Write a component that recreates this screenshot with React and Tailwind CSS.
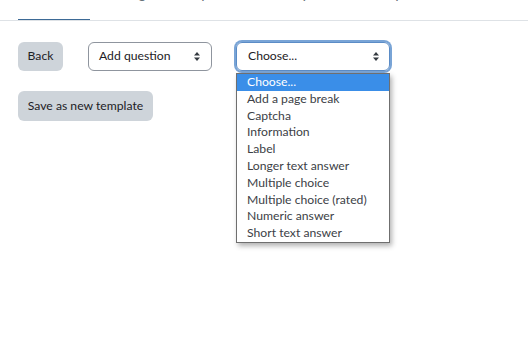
import React from "react";

function Arrows() {
  return (
    <svg width="6" height="9" viewBox="0 0 6 9" className="shrink-0">
      <path d="M3 0 L6 3.4 L0 3.4 Z" fill="#343a40" />
      <path d="M3 9 L6 5.6 L0 5.6 Z" fill="#343a40" />
    </svg>
  );
}

const items = [
  "Choose...",
  "Add a page break",
  "Captcha",
  "Information",
  "Label",
  "Longer text answer",
  "Multiple choice",
  "Multiple choice (rated)",
  "Numeric answer",
  "Short text answer",
];

export default function App() {
  return (
    <div
      className="w-[528px] h-[346px] bg-white overflow-hidden text-[#1d2125]"
      style={{ fontFamily: 'Lato, "Noto Sans", sans-serif' }}
    >
      {/* tabs, scrolled mostly out of view */}
      <div className="h-[21px] border-b border-[#dee2e6] flex items-end pl-[18px] overflow-hidden">
        <div className="w-[72px] h-[2px] bg-[#3d6a96] mb-[-1px] shrink-0" />
        <div className="flex text-[15px] leading-[20px] text-[#6a737b] whitespace-nowrap -translate-y-[18px]">
          <span className="ml-[10px]">Settings</span>
          <span className="ml-[14px]">Edit questions</span>
          <span className="ml-[12px]">Analysis</span>
          <span className="ml-[10px]">Show responses</span>
        </div>
      </div>

      <div className="flex items-start pl-[18px] pt-[21px] text-[12.2px] whitespace-nowrap">
        <button className="h-[29px] w-[45px] rounded-[6px] bg-[#ced4da] text-[#1d2125]">
          Back
        </button>
        <div className="ml-[25px] h-[29px] w-[124px] rounded-[6px] border border-[#8f959e] flex items-center justify-between pl-[10px] pr-[11px] text-[#1d2125]">
          <span>Add question</span>
          <Arrows />
        </div>
        <div className="relative ml-[24px]">
          <div className="h-[29px] w-[154px] rounded-[6px] border border-[#5b8cc6] ring-[2px] ring-[#79a4d6] flex items-center justify-between pl-[11px] pr-[10px] text-[#1d2125]">
            <span>Choose...</span>
            <Arrows />
          </div>
          <div className="absolute left-0 top-[31px] w-[154px] border border-[#6f6f6f] bg-white shadow-[2px_3px_5px_rgba(0,0,0,0.3)] z-10">
            {items.map((t, i) => (
              <div
                key={t}
                className={
                  "h-[16.8px] leading-[16.8px] pl-[10px] text-[12.2px] " +
                  (i === 0 ? "bg-[#3a8ee8] text-white" : "text-[#3c4146]")
                }
              >
                {t}
              </div>
            ))}
          </div>
        </div>
      </div>

      <div className="pl-[18px] pt-[20px] text-[12.2px] whitespace-nowrap">
        <button className="h-[30px] w-[135px] rounded-[6px] bg-[#ced4da] text-[#1d2125]">
          Save as new template
        </button>
      </div>
    </div>
  );
}
